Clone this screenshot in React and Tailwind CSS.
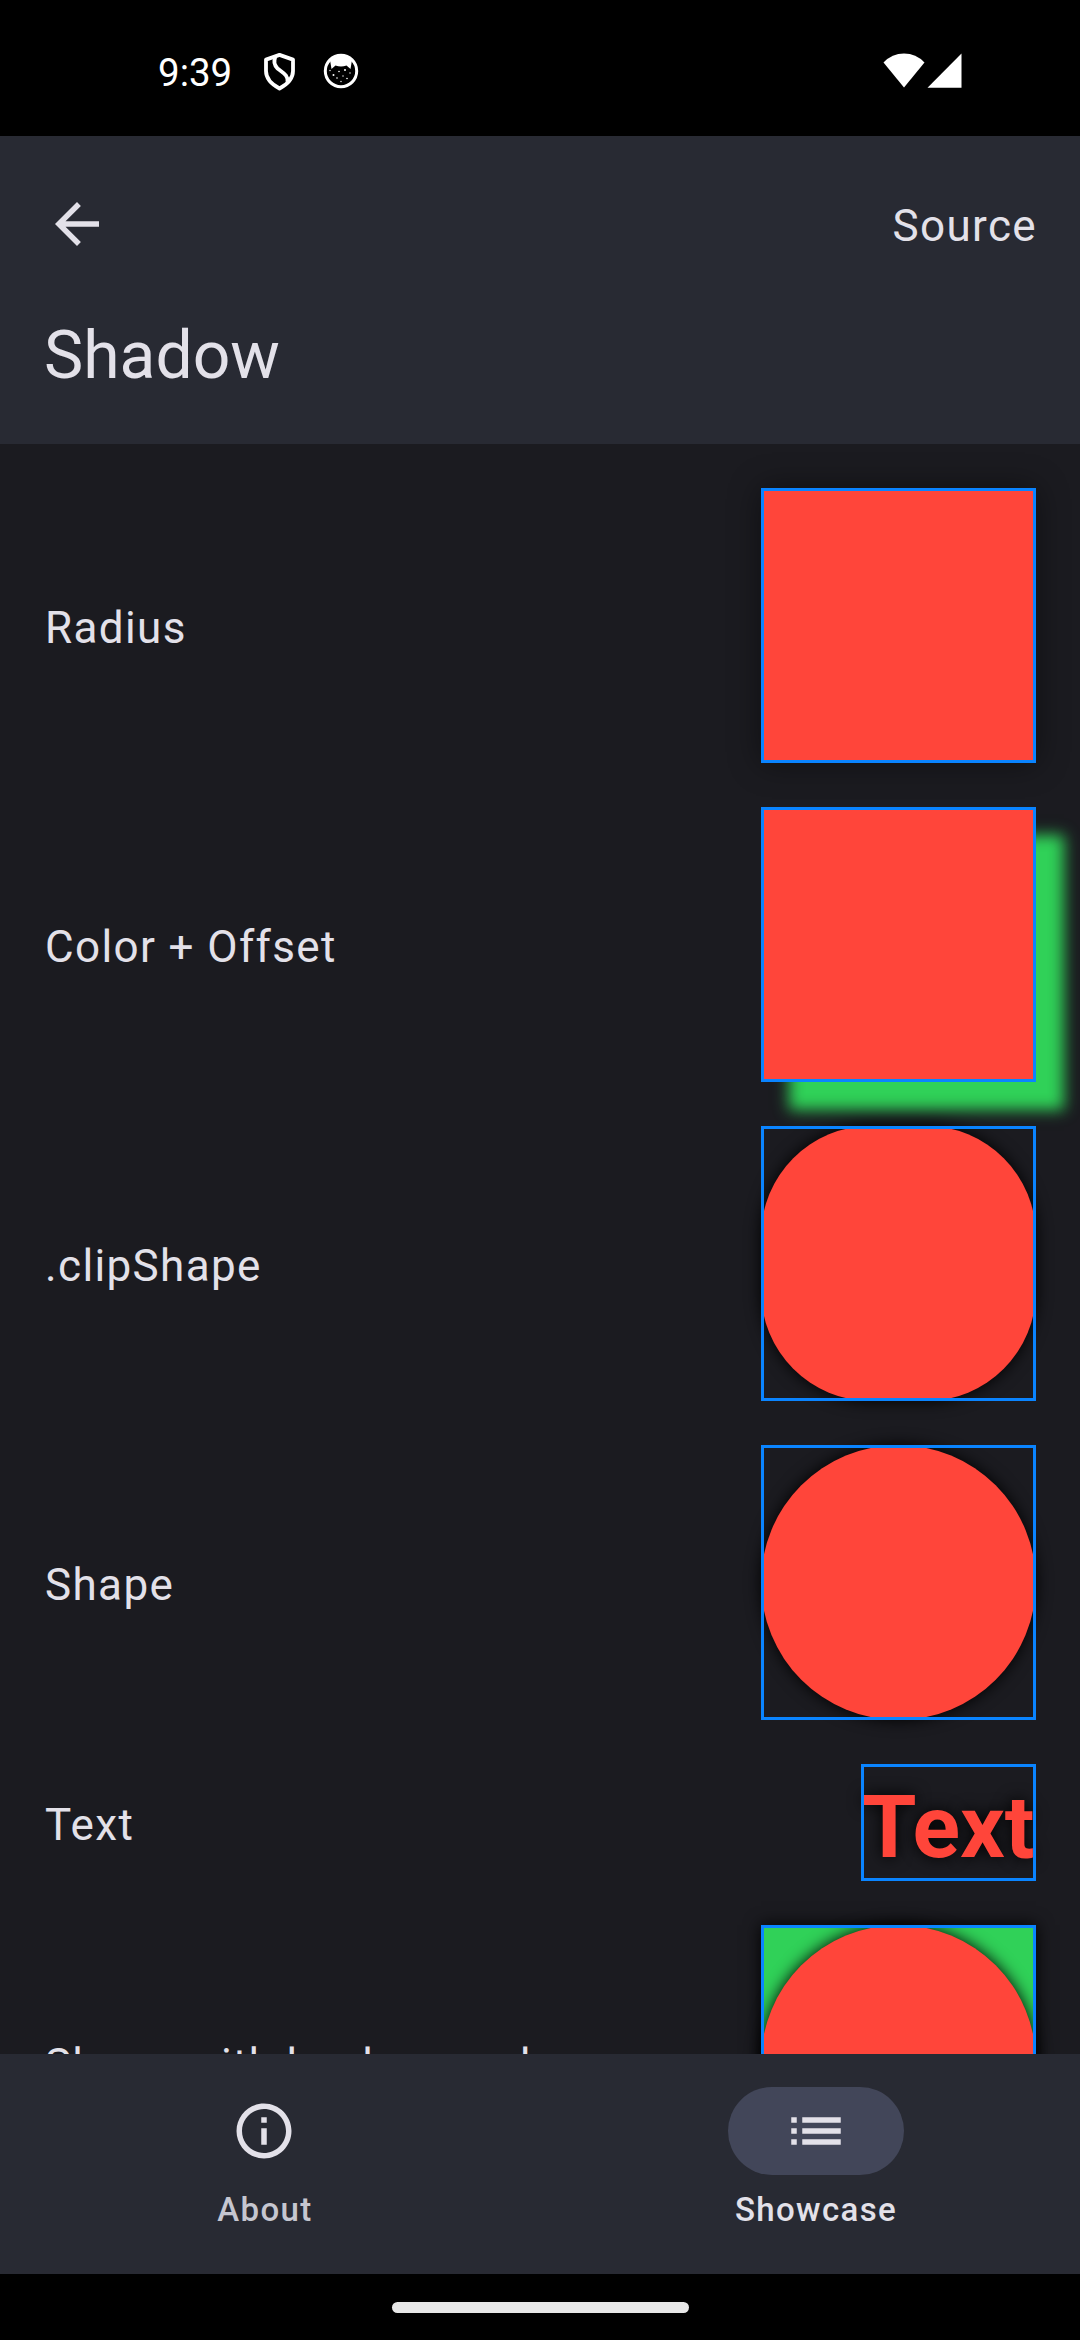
const outline =
  "pointer-events-none absolute inset-0 border-[3px] border-[#0a84ff]";

function StatusBar() {
  return (
    <div className="flex h-[136px] shrink-0 items-start bg-black pl-[158px] pr-[118px] text-white">
      <span className="mt-[50px] w-[74px] text-[38.5px] leading-[46px] whitespace-nowrap">9:39</span>
      <svg className="mt-[52px] ml-[31px] h-[39px] w-[33px]" viewBox="0 0 33 39" fill="none" stroke="white" strokeWidth="3.8" strokeLinejoin="round">
        <path d="M16.5 2.9 L30 7.6 V19 C30 26.5 24 32.5 16.5 36.5 C9 32.5 3 26.5 3 19 V7.6 Z" />
        <path d="M12.3 5.5 C10.5 9 11 12.5 14.5 16.5 C20 21 25.5 23 24.5 30" />
      </svg>
      <svg className="mt-[53px] ml-[27px] h-[36px] w-[36px]" viewBox="0 0 36 36">
        <circle cx="18" cy="18" r="15.7" fill="none" stroke="white" strokeWidth="3" />
        <path d="M7 7 Q18 -2 29 7 L27.5 16 L23.5 12.5 Q18 14.5 12.5 12.5 L8.5 16 Z" fill="white" />
        <g fill="white">
          <circle cx="10.5" cy="22" r="1" />
          <circle cx="16" cy="18.5" r="0.8" />
          <circle cx="22" cy="17" r="1" />
          <circle cx="27" cy="20" r="0.7" />
          <circle cx="14" cy="25" r="0.8" />
          <circle cx="20" cy="23" r="0.7" />
          <circle cx="24" cy="25.5" r="0.8" />
          <circle cx="18" cy="28.5" r="0.7" />
          <circle cx="7" cy="17.5" r="0.7" />
        </g>
      </svg>
      <svg className="mt-[53px] ml-auto h-[35px] w-[42px]" viewBox="0 0 42 35" fill="white">
        <path d="M0.5 9.5 Q9 0.5 21 0.5 Q33 0.5 41.5 9.5 L21 34.5 Z" />
      </svg>
      <svg className="mt-[53px] ml-[2px] h-[35px] w-[35px]" viewBox="0 0 35 35" fill="white">
        <path d="M34.5 0.5 V34.7 H0.5 Z" />
      </svg>
    </div>
  );
}

function Header() {
  return (
    <header className="relative z-10 h-[308px] shrink-0 bg-[#282a33] px-11">
      <div className="flex h-[176px] items-center justify-between">
        <svg className="size-[66px]" viewBox="0 0 24 24" fill="currentColor">
          <path d="M20 11H7.83l5.59-5.59L12 4l-8 8 8 8 1.41-1.41L7.83 13H20v-2z" />
        </svg>
        <span className="mt-[3px] -mr-px text-[44px] leading-[66px] tracking-[1.375px]">Source</span>
      </div>
      <h1 className="text-[66px] leading-[88px]">Shadow</h1>
    </header>
  );
}

function Row({ label, children }) {
  return (
    <div className="flex shrink-0 items-center justify-between">
      <span className="mt-[5px] pl-px text-[44px] leading-[66px] tracking-[1.375px]">{label}</span>
      {children}
    </div>
  );
}

function Sample({ className = "", children }) {
  return (
    <div className={`relative size-[275px] shrink-0 ${className}`}>
      {children}
      <div className={outline} />
    </div>
  );
}

function Content() {
  return (
    <main className="flex min-h-0 flex-1 flex-col gap-11 overflow-hidden pt-11 pr-11 pl-11">
      <Row label="Radius">
        <Sample>
          <div className="size-full bg-[#ff453a] shadow-[0_0_30px_rgba(0,0,0,0.45)]" />
        </Sample>
      </Row>
      <Row label="Color + Offset">
        <Sample>
          <div className="size-full bg-[#ff453a] shadow-[27.5px_27.5px_14px_#30d158]" />
        </Sample>
      </Row>
      <Row label=".clipShape">
        <Sample>
          <div className="size-full rounded-[110px] bg-[#ff453a] shadow-[0_0_16px_#000]" />
        </Sample>
      </Row>
      <Row label="Shape">
        <Sample>
          <div className="size-full rounded-full bg-[#ff453a] shadow-[0_0_16px_#000]" />
        </Sample>
      </Row>
      <Row label="Text">
        <div className="relative h-[117px] w-[175px] shrink-0">
          <div className="pt-[4px] pl-px text-[88px] leading-[117px] font-bold whitespace-nowrap text-[#ff453a] [text-shadow:0_0_16px_#000]">
            Text
          </div>
          <div className={outline} />
        </div>
      </Row>
      <Row label="Shape with background">
        <Sample className="bg-[#30d158] shadow-[0_0_16px_#000]">
          <div className="size-full rounded-full bg-[#ff453a] shadow-[0_0_16px_#000]" />
        </Sample>
      </Row>
    </main>
  );
}

function BottomNav() {
  return (
    <nav className="relative z-10 flex h-[220px] shrink-0 gap-[22px] bg-[#282a33] pt-[33px] text-[33px] leading-[44px] font-medium tracking-[1.375px]">
      <div className="flex flex-1 flex-col items-center gap-[13px]">
        <div className="flex h-[88px] w-[176px] items-center justify-center">
          <svg className="mr-px size-[66px]" viewBox="0 0 24 24" fill="currentColor">
            <path d="M11 7h2v2h-2zm0 4h2v6h-2zm1-9C6.48 2 2 6.48 2 12s4.48 10 10 10 10-4.48 10-10S17.52 2 12 2zm0 18c-4.41 0-8-3.59-8-8s3.59-8 8-8 8 3.59 8 8-3.59 8-8 8z" />
          </svg>
        </div>
        <span className="pl-px text-[#c5c6d0]">About</span>
      </div>
      <div className="flex flex-1 flex-col items-center gap-[13px]">
        <div className="flex h-[88px] w-[176px] items-center justify-center rounded-full bg-[#424659]">
          <svg className="size-[66px]" viewBox="0 0 24 24" fill="currentColor">
            <path d="M3 13h2v-2H3v2zm0 4h2v-2H3v2zm0-8h2V7H3v2zm4 4h14v-2H7v2zm0 4h14v-2H7v2zM7 7v2h14V7H7z" />
          </svg>
        </div>
        <span className="pl-px">Showcase</span>
      </div>
    </nav>
  );
}

export default function App() {
  return (
    <div className="flex h-[2340px] w-[1080px] flex-col overflow-hidden bg-[#1b1b20] font-[Roboto,sans-serif] text-[#e3e1e9]">
      <StatusBar />
      <Header />
      <Content />
      <BottomNav />
      <div className="flex h-[66px] shrink-0 items-center justify-center bg-black">
        <div className="h-[11px] w-[297px] rounded-full bg-[#e8e8e8]" />
      </div>
    </div>
  );
}
